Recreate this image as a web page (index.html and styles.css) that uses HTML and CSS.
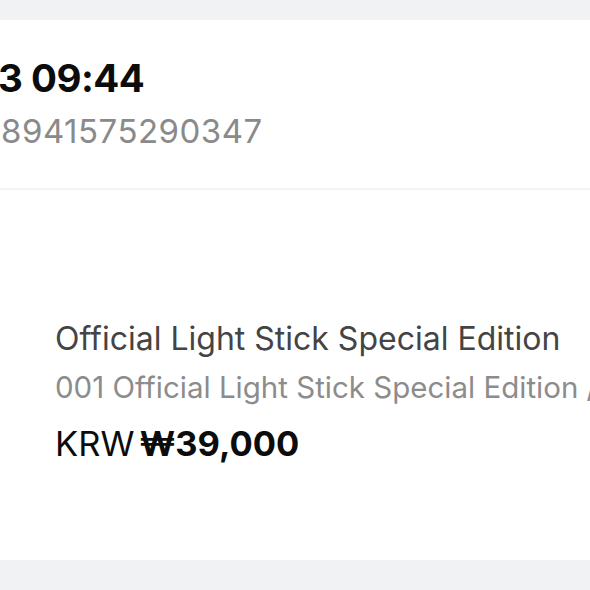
FILE: index.html
```html
<!DOCTYPE html>
<html>
<head>
<meta charset="utf-8">
<link rel="stylesheet" href="styles.css">
</head>
<body>
<div class="page">
  <div class="card">
    <div class="order-head">
      <div class="order-date">3 09:44</div>
      <div class="order-no">8941575290347</div>
    </div>
    <div class="product">
      <div class="product-info">
        <div class="product-name">Official Light Stick Special Edition</div>
        <div class="product-option">001 Official Light Stick Special Edition / 1</div>
        <div class="product-price"><span class="cur">KRW</span><span class="amount">₩39,000</span></div>
      </div>
    </div>
  </div>
</div>
</body>
</html>
```
FILE: styles.css
```css
html, body {
  margin: 0;
  padding: 0;
  background: #f1f2f4;
  overflow: hidden;
  font-family: "Inter", "Noto Sans", sans-serif;
}
.page {
  width: 590px;
  height: 590px;
  padding-top: 20px;
  box-sizing: border-box;
  overflow: hidden;
}
.card {
  background: #ffffff;
  height: 540px;
}
.order-head {
  height: 170px;
  border-bottom: 2px solid #f3f3f4;
  box-sizing: border-box;
  padding-top: 34px;
}
.order-date {
  font-size: 38.5px;
  font-weight: 700;
  color: #0c0c0c;
  line-height: 48px;
  letter-spacing: -0.5px;
  margin-left: -2px;
  white-space: nowrap;
}
.order-no {
  font-size: 33px;
  color: #8a8a8a;
  line-height: 40px;
  letter-spacing: 0.5px;
  margin-top: 9px;
  margin-left: 1px;
  white-space: nowrap;
}
.product {
  padding: 127px 0 0 55px;
  height: 370px;
  box-sizing: border-box;
}
.product-info {
  white-space: nowrap;
}
.product-name {
  font-size: 32px;
  color: #444;
  line-height: 44px;
}
.product-option {
  font-size: 29.5px;
  color: #8c8c8c;
  line-height: 44px;
  margin-top: 4px;
}
.product-price {
  font-size: 34.5px;
  color: #0c0c0c;
  line-height: 48px;
  margin-top: 11px;
}
.cur {
  font-weight: 400;
  margin-right: 5px;
}
.amount {
  font-weight: 700;
}
```
